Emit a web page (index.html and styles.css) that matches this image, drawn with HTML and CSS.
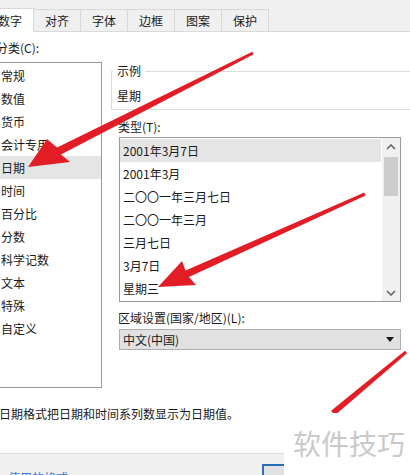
FILE: index.html
```html
<!DOCTYPE html>
<html lang="zh-CN">
<head>
<meta charset="utf-8">
<title>设置单元格格式</title>
<link rel="stylesheet" href="styles.css">
</head>
<body>
<div class="page">
  <div class="tabs">
    <div class="tab active">数字</div>
    <div class="tab">对齐</div>
    <div class="tab">字体</div>
    <div class="tab">边框</div>
    <div class="tab">图案</div>
    <div class="tab">保护</div>
  </div>
  <div class="body">
    <div class="left">
      <div class="label cat-label">分类(C):</div>
      <div class="catlist">
        <div class="item">常规</div>
        <div class="item">数值</div>
        <div class="item">货币</div>
        <div class="item">会计专用</div>
        <div class="item sel">日期</div>
        <div class="item">时间</div>
        <div class="item">百分比</div>
        <div class="item">分数</div>
        <div class="item">科学记数</div>
        <div class="item">文本</div>
        <div class="item">特殊</div>
        <div class="item">自定义</div>
      </div>
    </div>
    <div class="right">
      <fieldset class="sample">
        <legend>示例</legend>
        <div class="sample-text">星期</div>
      </fieldset>
      <div class="label type-label">类型(T):</div>
      <div class="typelist">
        <div class="rows">
          <div class="row sel">2001年3月7日</div>
          <div class="row">2001年3月</div>
          <div class="row">二〇〇一年三月七日</div>
          <div class="row">二〇〇一年三月</div>
          <div class="row">三月七日</div>
          <div class="row">3月7日</div>
          <div class="row">星期三</div>
        </div>
        <div class="scroll">
          <div class="sbtn"><svg width="10" height="6" viewBox="0 0 10 6"><polyline points="1,5 5,1 9,5" fill="none" stroke="#606060" stroke-width="1.5"/></svg></div>
          <div class="track"><div class="thumb"></div></div>
          <div class="sbtn"><svg width="10" height="6" viewBox="0 0 10 6"><polyline points="1,1 5,5 9,1" fill="none" stroke="#606060" stroke-width="1.5"/></svg></div>
        </div>
      </div>
      <div class="label region-label">区域设置(国家/地区)(L):</div>
      <div class="select">
        <span>中文(中国)</span>
        <svg width="8" height="5" viewBox="0 0 8 5"><polygon points="0,0 8,0 4,5" fill="#1a1a1a"/></svg>
      </div>
    </div>
  </div>
  <div class="desc">日期格式把日期和时间系列数显示为日期值。</div>
  <div class="footer">
    <span class="link">使用的格式</span>
    <div class="btn"></div>
  </div>
  <svg class="arrows" width="410" height="475" viewBox="0 0 410 475">
    <polygon fill="#e21d26" points="28,167 70,162 61,154.5 253.7,54.3 252.3,51.7 57,147.5 47,139"/>
    <polygon fill="#e21d26" points="158,287 196,285 189,277 365.6,195.4 364.4,192.6 185.5,270.5 182,261"/>
    <polygon fill="#e21d26" points="407,353.2 405,350.8 331.1,410.7 334.9,415.3"/>
  </svg>
  <div class="watermark">软件技巧</div>
</div>
</body>
</html>
```
FILE: styles.css
```css
html, body {
  margin: 0;
  padding: 0;
}
body {
  font-family: "Noto Sans CJK SC", "Noto Sans", sans-serif;
  font-size: 12px;
  color: #1a1a1a;
  background: #ffffff;
}
.page {
  position: relative;
  width: 410px;
  height: 475px;
  overflow: hidden;
  background: #ffffff;
}
.tabs {
  display: flex;
  align-items: flex-end;
  height: 31px;
  background: #f0f0f0;
  border-bottom: 1px solid #d9d9d9;
  margin-left: -14px;
}
.tab {
  box-sizing: border-box;
  width: 48px;
  height: 22px;
  margin-right: -1px;
  border: 1px solid #d9d9d9;
  border-bottom: none;
  background: #f0f0f0;
  display: flex;
  align-items: center;
  justify-content: center;
  line-height: 16px;
}
.tab.active {
  height: 24px;
  margin-bottom: -1px;
  background: #ffffff;
  position: relative;
  z-index: 1;
}
.body {
  display: flex;
  align-items: flex-start;
}
.label {
  line-height: 16px;
  white-space: nowrap;
}
.left {
  width: 103px;
  margin-left: -1px;
  flex: none;
}
.cat-label {
  padding-top: 8px;
  height: 22px;
  text-indent: -3px;
}
.catlist {
  box-sizing: border-box;
  height: 326px;
  border: 1px solid #9a9a9a;
  padding: 1px 0 0 0;
}
.item {
  height: 23px;
  line-height: 23px;
  padding-left: 1px;
}
.item.sel {
  background: #e5e5e5;
}
.right {
  margin-left: 9px;
  width: 299px;
  flex: none;
}
.sample {
  margin: 31px 0 0 0;
  width: 320px;
  box-sizing: border-box;
  border: 1px solid #dcdcdc;
  padding: 9px 0 5px 1px;
}
.sample legend {
  padding: 0 4px;
  line-height: 16px;
}
.sample-text {
  line-height: 16px;
  padding-left: 4px;
}
.type-label {
  margin-top: 9px;
  padding-left: 7px;
}
.typelist {
  box-sizing: border-box;
  margin: 2px 0 0 8px;
  width: 282px;
  height: 165px;
  border: 1px solid #9a9a9a;
  display: flex;
}
.rows {
  flex: 1;
  padding-top: 1px;
}
.row {
  height: 23px;
  line-height: 23px;
  padding-left: 3px;
  margin-right: 1px;
}
.row.sel {
  background: #e5e5e5;
}
.scroll {
  width: 18px;
  background: #f0f0f0;
  display: flex;
  flex-direction: column;
}
.sbtn {
  height: 17px;
  display: flex;
  align-items: center;
  justify-content: center;
}
.track {
  flex: 1;
  padding: 2px 2px 0 2px;
}
.thumb {
  height: 39px;
  background: #cdcdcd;
}
.region-label {
  margin-top: 8px;
  padding-left: 7px;
}
.select {
  box-sizing: border-box;
  margin: 3px 0 0 8px;
  width: 282px;
  height: 21px;
  border: 1px solid #adadad;
  background: #e1e1e1;
  display: flex;
  align-items: center;
  justify-content: space-between;
  padding: 0 6px 0 3px;
}
.desc {
  margin: 18px 0 0 -1px;
  line-height: 16px;
  white-space: nowrap;
}
.footer {
  margin-top: 31px;
  height: 40px;
  border-top: 1px solid #dfdfdf;
  background: #f0f0f0;
  display: flex;
  align-items: flex-start;
  justify-content: space-between;
}
.link {
  margin: 16px 0 0 8px;
  color: #3a7bd5;
  line-height: 16px;
}
.btn {
  box-sizing: border-box;
  width: 80px;
  height: 30px;
  margin: 10px 68px 0 0;
  border: 2px solid #2a6fb5;
  background: #e1e1e1;
}
.arrows {
  position: absolute;
  left: 0;
  top: 0;
  pointer-events: none;
}
.watermark {
  position: absolute;
  left: 284px;
  top: 413px;
  width: 126px;
  height: 62px;
  background: #ffffff;
  color: #c9c9c9;
  font-size: 28px;
  line-height: 32px;
  padding: 14px 0 0 9px;
  box-sizing: border-box;
  letter-spacing: 0;
  white-space: nowrap;
}
```
